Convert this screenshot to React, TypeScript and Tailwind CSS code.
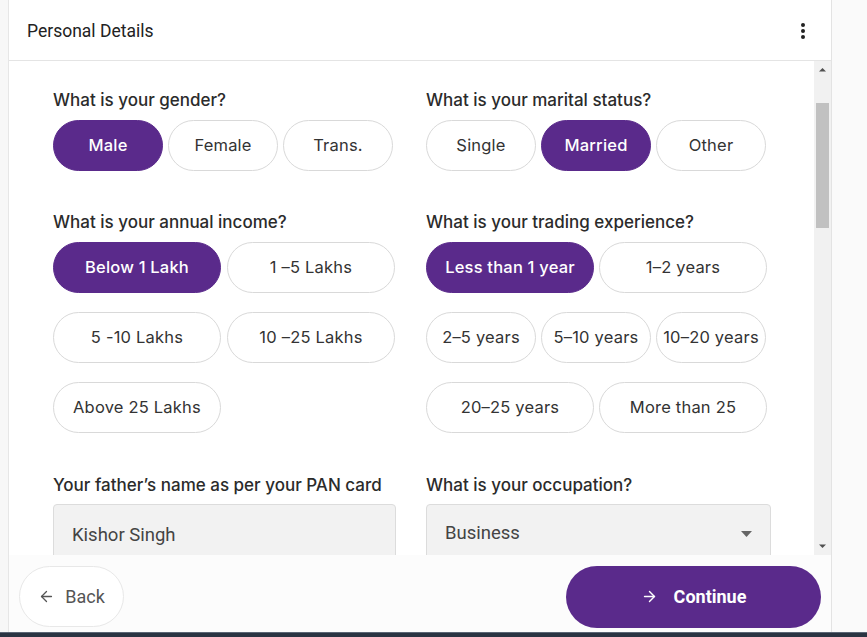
import { ArrowLeft, ArrowRight } from 'lucide-react';

type Opt = { label: string; selected?: boolean };

const GENDER: Opt[] = [{ label: 'Male', selected: true }, { label: 'Female' }, { label: 'Trans.' }];
const MARITAL: Opt[] = [{ label: 'Single' }, { label: 'Married', selected: true }, { label: 'Other' }];
const INCOME: Opt[][] = [
  [{ label: 'Below 1 Lakh', selected: true }, { label: '1 –5 Lakhs' }],
  [{ label: '5 -10 Lakhs' }, { label: '10 –25 Lakhs' }],
  [{ label: 'Above 25 Lakhs' }],
];
const EXPERIENCE: Opt[][] = [
  [{ label: 'Less than 1 year', selected: true }, { label: '1–2 years' }],
  [{ label: '2–5 years' }, { label: '5–10 years' }, { label: '10–20 years' }],
  [{ label: '20–25 years' }, { label: 'More than 25' }],
];

function Pill({ opt, wide }: { opt: Opt; wide?: boolean }) {
  return (
    <button
      className={
        (wide ? 'w-[168px] ' : 'w-[110px] ') +
        'h-[51px] shrink-0 rounded-full text-[16.5px] tracking-[0.2px] flex items-center justify-center ' +
        (opt.selected
          ? 'bg-[#5a2a8b] text-white font-medium border border-[#5a2a8b]'
          : 'bg-white text-[#333] border border-[#d9d9d9]')
      }
    >
      {opt.label}
    </button>
  );
}

function Label({ children }: { children: React.ReactNode }) {
  return <div className="h-[20px] leading-[20px] text-[17px] text-[#2b2b2b] font-medium">{children}</div>;
}

export default function App() {
  return (
    <div className="w-[867px] h-[637px] flex flex-col bg-[#fafafa] overflow-hidden" style={{ fontFamily: 'Inter, "Noto Sans", sans-serif' }}>
      <div className="h-[632px] flex">
        <div className="w-[9px] border-r border-[#e6e6e6] bg-[#f7f7f7]" />
        <div className="w-[823px] flex flex-col bg-white border-r border-[#e3e3e3]">
          {/* Header */}
          <div className="h-[61px] shrink-0 border-b border-[#e4e4e4] flex items-center justify-between pl-[18px] pr-[25px]">
            <span className="text-[17.5px] text-[#222] mt-[2px]" style={{ fontFamily: 'Roboto, "Liberation Sans", sans-serif' }}>
              Personal Details
            </span>
            <svg width="6" height="18" viewBox="0 0 6 18" className="mt-[1px]">
              <circle cx="3" cy="3" r="2" fill="#222" />
              <circle cx="3" cy="9" r="2" fill="#222" />
              <circle cx="3" cy="15" r="2" fill="#222" />
            </svg>
          </div>

          {/* Scroll body */}
          <div className="h-[494px] flex">
            <div className="flex-1 overflow-hidden pl-[44px] pt-[29px]">
              <div className="grid grid-cols-[373px_1fr]">
                <div>
                  <Label>What is your gender?</Label>
                  <div className="flex gap-[5px] mt-[10px]">
                    {GENDER.map((o) => (
                      <Pill key={o.label} opt={o} />
                    ))}
                  </div>
                </div>
                <div>
                  <Label>What is your marital status?</Label>
                  <div className="flex gap-[5px] mt-[10px]">
                    {MARITAL.map((o) => (
                      <Pill key={o.label} opt={o} />
                    ))}
                  </div>
                </div>

                <div className="mt-[41px]">
                  <Label>What is your annual income?</Label>
                  <div className="flex flex-col gap-[19px] mt-[10px]">
                    {INCOME.map((row, i) => (
                      <div key={i} className="flex gap-[6px]">
                        {row.map((o) => (
                          <Pill key={o.label} opt={o} wide />
                        ))}
                      </div>
                    ))}
                  </div>
                </div>
                <div className="mt-[41px]">
                  <Label>What is your trading experience?</Label>
                  <div className="flex flex-col gap-[19px] mt-[10px]">
                    {EXPERIENCE.map((row, i) => (
                      <div key={i} className="flex gap-[5px]">
                        {row.map((o) => (
                          <Pill key={o.label} opt={o} wide={row.length === 2} />
                        ))}
                      </div>
                    ))}
                  </div>
                </div>

                <div className="mt-[42px]">
                  <Label>Your father’s name as per your PAN card</Label>
                  <div
                    className="mt-[9px] w-[343px] h-[60px] bg-[#f2f2f2] border border-[#dcdcdc] rounded-[4px] pl-[18px] pt-[17px] text-[18.5px] text-[#444]"
                    style={{ fontFamily: 'Roboto, "Liberation Sans", sans-serif' }}
                  >
                    Kishor Singh
                  </div>
                </div>
                <div className="mt-[42px]">
                  <Label>What is your occupation?</Label>
                  <div
                    className="mt-[9px] w-[345px] h-[60px] bg-[#f2f2f2] border border-[#dcdcdc] rounded-[4px] pl-[18px] pr-[18px] pt-[15px] flex justify-between text-[18.5px] text-[#444]"
                    style={{ fontFamily: 'Roboto, "Liberation Sans", sans-serif' }}
                  >
                    <span>Business</span>
                    <svg width="11" height="6" viewBox="0 0 11 6" className="mt-[11px]">
                      <path d="M0 0h11L5.5 6z" fill="#666" />
                    </svg>
                  </div>
                </div>
              </div>
            </div>

            {/* Scrollbar */}
            <div className="w-[17px] bg-[#f1f1f1] flex flex-col items-center">
              <svg width="8" height="17" viewBox="0 0 8 17">
                <path d="M0 10.5h7L3.5 7z" fill="#505050" />
              </svg>
              <div className="w-[13px] h-[125px] bg-[#c1c1c1] mt-[25px]" />
              <div className="flex-1" />
              <svg width="8" height="17" viewBox="0 0 8 17">
                <path d="M0 6.5h7L3.5 10z" fill="#505050" />
              </svg>
            </div>
          </div>

          {/* Footer */}
          <div
            className="flex-1 bg-[#fcfcfc] flex items-center justify-between pl-[10px] pr-[10px]"
            style={{ fontFamily: 'Roboto, "Liberation Sans", sans-serif' }}
          >
            <button className="w-[105px] h-[61px] rounded-full border border-[#e8e8e8] bg-white flex items-center justify-center gap-[10px] text-[18px] text-[#555] mt-[6px]">
              <ArrowLeft size={17} strokeWidth={1.8} />
              <span>Back</span>
            </button>
            <button className="w-[255px] h-[62px] rounded-full bg-[#5a2a8b] flex items-center justify-center gap-[16px] text-[18px] font-bold text-white mt-[6px]">
              <ArrowRight size={17} strokeWidth={2} />
              <span>Continue</span>
            </button>
          </div>
        </div>
      </div>
      <div className="h-[5px] bg-[#2a3442] border-t border-[#5b6675]" />
    </div>
  );
}
